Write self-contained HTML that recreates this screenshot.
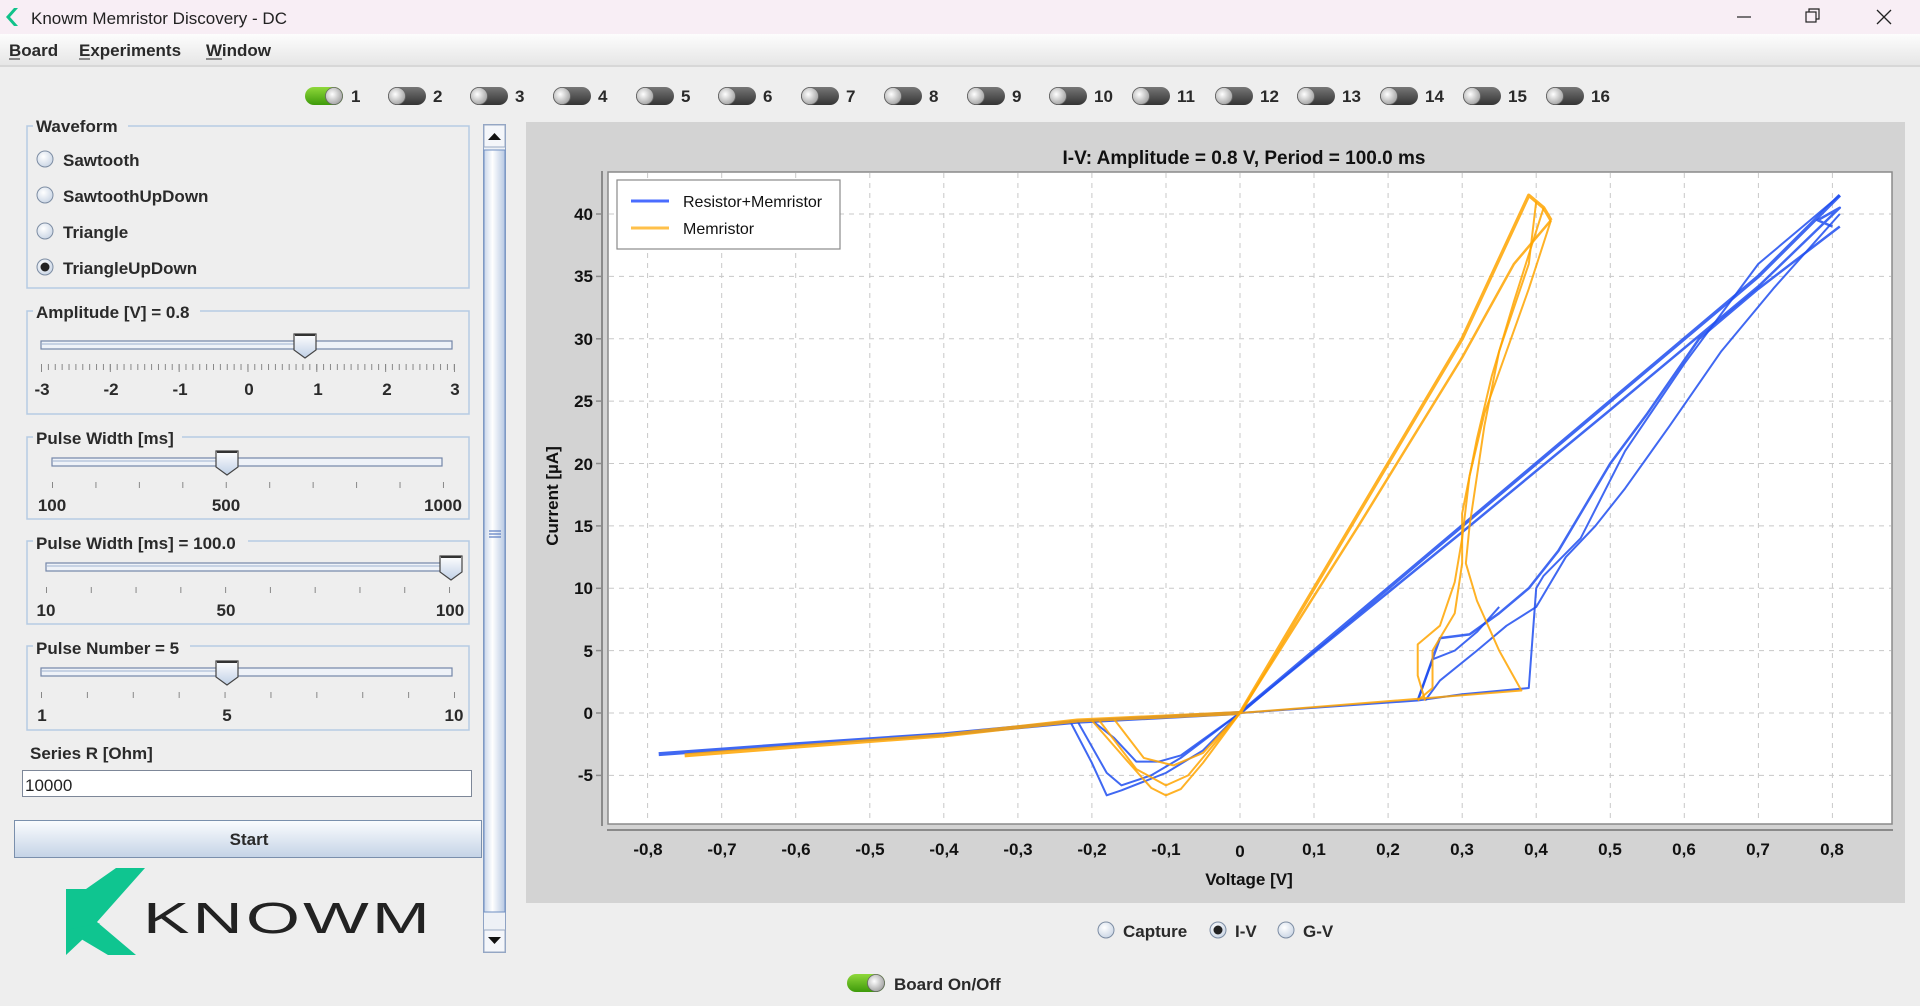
<!DOCTYPE html>
<html><head><meta charset="utf-8"><style>
html,body{margin:0;padding:0;width:1920px;height:1006px;overflow:hidden;background:#eeeeee;font-family:"Liberation Sans",sans-serif}
svg text{font-family:"Liberation Sans",sans-serif}
</style></head><body>
<svg width="1920" height="1006" viewBox="0 0 1920 1006" xmlns="http://www.w3.org/2000/svg" style="position:absolute;left:0;top:0">
<defs>
<linearGradient id="mb" x1="0" y1="0" x2="0" y2="1"><stop offset="0" stop-color="#fdfdfd"/><stop offset="1" stop-color="#e6e6e6"/></linearGradient>
<linearGradient id="tg" x1="0" y1="0" x2="0" y2="1"><stop offset="0" stop-color="#777"/><stop offset="1" stop-color="#333"/></linearGradient>
<linearGradient id="tgg" x1="0" y1="0" x2="0" y2="1"><stop offset="0" stop-color="#8fd83a"/><stop offset="1" stop-color="#3e9a0a"/></linearGradient>
<radialGradient id="kn" cx="0.4" cy="0.4" r="0.7"><stop offset="0" stop-color="#fff"/><stop offset="1" stop-color="#999"/></radialGradient>
<linearGradient id="btn" x1="0" y1="0" x2="0" y2="1"><stop offset="0" stop-color="#fbfcfe"/><stop offset="1" stop-color="#c4d3e6"/></linearGradient>
<linearGradient id="sb" x1="0" y1="0" x2="1" y2="0"><stop offset="0" stop-color="#c9d6ea"/><stop offset="0.4" stop-color="#fff"/><stop offset="1" stop-color="#b7c8e2"/></linearGradient>
<linearGradient id="th" x1="0" y1="0" x2="0" y2="1"><stop offset="0" stop-color="#fff"/><stop offset="1" stop-color="#c0d0e6"/></linearGradient>
<radialGradient id="rd" cx="0.4" cy="0.35" r="0.7"><stop offset="0" stop-color="#fff"/><stop offset="1" stop-color="#c8d4e4"/></radialGradient>
<g id="tog"><rect x="0" y="-9" width="38" height="18" rx="9" fill="url(#tg)"/><circle cx="9" cy="0" r="8.5" fill="url(#kn)" stroke="#666" stroke-width="0.8"/></g>
<g id="thumb"><path d="M-11,-11 H11 V5 L0,13 L-11,5 Z" fill="url(#th)" stroke="#444" stroke-width="1.2"/><line x1="-10" y1="-10" x2="10" y2="-10" stroke="#333" stroke-width="2"/></g>
</defs>

<!-- title bar -->
<rect x="0" y="0" width="1920" height="34" fill="#f8eef5"/>
<path d="M14,8 L6,17 L14,26 L18,26 L10,17 L18,8 Z" fill="#11c28a"/>
<text x="31" y="24" font-size="17" fill="#222">Knowm Memristor Discovery - DC</text>
<line x1="1737" y1="17" x2="1751" y2="17" stroke="#222" stroke-width="1.2"/>
<rect x="1806" y="12" width="10" height="10" fill="none" stroke="#222" stroke-width="1.2"/><path d="M1809,12 V9 H1819 V19 H1816" fill="none" stroke="#222" stroke-width="1.2"/>
<path d="M1877,10 L1891,24 M1891,10 L1877,24" stroke="#222" stroke-width="1.3"/>
<!-- menu -->
<rect x="0" y="34" width="1920" height="31" fill="url(#mb)"/>
<line x1="0" y1="66" x2="1920" y2="66" stroke="#cfcfcf" stroke-width="1.5"/>
<g font-size="17" font-weight="bold" fill="#2a2a2a">
<text x="9" y="56">Board</text><text x="79" y="56">Experiments</text><text x="206" y="56">Window</text></g>
<g stroke="#2a2a2a" stroke-width="1"><line x1="9" y1="59" x2="20" y2="59"/><line x1="79" y1="59" x2="90" y2="59"/><line x1="206" y1="59" x2="222" y2="59"/></g>

<!-- toggles -->
<g font-size="17" font-weight="bold" fill="#2a2a2a">
<g transform="translate(305,96)"><rect x="0" y="-9" width="38" height="18" rx="9" fill="url(#tgg)"/><circle cx="29" cy="0" r="8.5" fill="url(#kn)" stroke="#666" stroke-width="0.8"/></g><text x="351" y="102">1</text>
<use href="#tog" x="388" y="96"/><text x="433" y="102">2</text>
<use href="#tog" x="470" y="96"/><text x="515" y="102">3</text>
<use href="#tog" x="553" y="96"/><text x="598" y="102">4</text>
<use href="#tog" x="636" y="96"/><text x="681" y="102">5</text>
<use href="#tog" x="718" y="96"/><text x="763" y="102">6</text>
<use href="#tog" x="801" y="96"/><text x="846" y="102">7</text>
<use href="#tog" x="884" y="96"/><text x="929" y="102">8</text>
<use href="#tog" x="967" y="96"/><text x="1012" y="102">9</text>
<use href="#tog" x="1049" y="96"/><text x="1094" y="102">10</text>
<use href="#tog" x="1132" y="96"/><text x="1177" y="102">11</text>
<use href="#tog" x="1215" y="96"/><text x="1260" y="102">12</text>
<use href="#tog" x="1297" y="96"/><text x="1342" y="102">13</text>
<use href="#tog" x="1380" y="96"/><text x="1425" y="102">14</text>
<use href="#tog" x="1463" y="96"/><text x="1508" y="102">15</text>
<use href="#tog" x="1546" y="96"/><text x="1591" y="102">16</text>
</g>

<!-- left panel -->
<g fill="none" stroke="#b5cbe3" stroke-width="1.5">
<path d="M33,126 H27 V288 H469 V126 H128"/>
<path d="M33,311 H27 V414 H469 V311 H200"/>
<path d="M33,437 H27 V519 H469 V437 H182"/>
<path d="M33,541 H27 V624 H469 V541 H248"/>
<path d="M33,646 H27 V730 H469 V646 H190"/>
</g>
<g font-size="17" font-weight="bold" fill="#2a2a2a">
<text x="36" y="132">Waveform</text>
<text x="63" y="166">Sawtooth</text><text x="63" y="202">SawtoothUpDown</text><text x="63" y="238">Triangle</text><text x="63" y="274">TriangleUpDown</text>
<text x="36" y="318">Amplitude [V] = 0.8</text>
<text x="36" y="444">Pulse Width [ms]</text>
<text x="36" y="549">Pulse Width [ms] = 100.0</text>
<text x="36" y="654">Pulse Number = 5</text>
<text x="30" y="759">Series R [Ohm]</text>
</g>
<g stroke="#7d8da3" stroke-width="1" fill="url(#rd)">
<circle cx="45" cy="159" r="8"/><circle cx="45" cy="195" r="8"/><circle cx="45" cy="231" r="8"/><circle cx="45" cy="267" r="8"/></g>
<circle cx="45" cy="267" r="4.5" fill="#222"/>
<!-- sliders -->
<g stroke="#7486a8" stroke-width="1.2" fill="#eef2f8">
<rect x="41" y="341" width="411" height="8"/><rect x="52" y="458" width="390" height="8"/><rect x="46" y="563" width="415" height="8"/><rect x="41" y="668" width="411" height="8"/></g>
<g stroke="#b9c8de" stroke-width="1.5"><line x1="42" y1="344" x2="300" y2="344"/><line x1="53" y1="461" x2="222" y2="461"/><line x1="47" y1="566" x2="445" y2="566"/><line x1="42" y1="671" x2="222" y2="671"/></g>
<use href="#thumb" x="305" y="345"/><use href="#thumb" x="227" y="462"/><use href="#thumb" x="451" y="567"/><use href="#thumb" x="227" y="672"/>
<g stroke="#888" stroke-width="1">
<line x1="41" y1="367" x2="456" y2="367" stroke-dasharray="1 5.88" stroke-width="6"/>
<line x1="41" y1="368" x2="456" y2="368" stroke-dasharray="1 67.83" stroke-width="8"/>
<line x1="52" y1="485" x2="445" y2="485" stroke-dasharray="1 42.44" stroke-width="6"/>
<line x1="46" y1="590" x2="452" y2="590" stroke-dasharray="1 43.78" stroke-width="6"/>
<line x1="41" y1="695" x2="456" y2="695" stroke-dasharray="1 44.89" stroke-width="6"/>
</g>
<g font-size="17" font-weight="bold" fill="#2a2a2a" text-anchor="middle">
<text x="42" y="395">-3</text><text x="111" y="395">-2</text><text x="180" y="395">-1</text><text x="249" y="395">0</text><text x="318" y="395">1</text><text x="387" y="395">2</text><text x="455" y="395">3</text>
<text x="52" y="511">100</text><text x="226" y="511">500</text><text x="443" y="511">1000</text>
<text x="46" y="616">10</text><text x="226" y="616">50</text><text x="450" y="616">100</text>
<text x="42" y="721">1</text><text x="227" y="721">5</text><text x="454" y="721">10</text>
</g>
<rect x="22.5" y="770.5" width="449" height="26" fill="#fff" stroke="#7d8798"/>
<text x="25" y="791" font-size="17" fill="#222">10000</text>
<rect x="14.5" y="820.5" width="467" height="37" fill="url(#btn)" stroke="#7a8fac"/>
<text x="249" y="845" font-size="17" font-weight="bold" fill="#2a2a2a" text-anchor="middle">Start</text>
<!-- logo -->
<path d="M116,868 H145 L97,922 L136,955 H108 L66,930 V889 L86,889 Z" fill="#0fc590"/>
<path d="M100,923 L66,930 L66,955 Z" fill="#0fc590"/>
<text x="143" y="933" font-size="44" fill="#222" font-weight="normal" textLength="290" lengthAdjust="spacingAndGlyphs" style="letter-spacing:2px">KNOWM</text>
<!-- scrollbar -->
<rect x="483.5" y="124.5" width="22" height="828" fill="#eef1f6" stroke="#8fa3c4"/>
<rect x="484" y="125" width="21" height="22" fill="#f4f6fa" stroke="#9aaac4"/>
<path d="M488,140 L494.5,133 L501,140 Z" fill="#111"/>
<rect x="484" y="930" width="21" height="22" fill="#f4f6fa" stroke="#9aaac4"/>
<path d="M488,937 L494.5,944 L501,937 Z" fill="#111"/>
<rect x="484" y="150" width="21" height="762" fill="url(#sb)" stroke="#6f8fc2"/>
<g stroke="#5a7bc0" stroke-width="1.2"><line x1="489" y1="531" x2="501" y2="531"/><line x1="489" y1="534" x2="501" y2="534"/><line x1="489" y1="537" x2="501" y2="537"/></g>

<!-- chart panel -->
<rect x="526" y="122" width="1379" height="781" fill="#d3d3d3"/>
<text x="1244" y="164" font-size="19" font-weight="bold" fill="#111" text-anchor="middle">I-V: Amplitude = 0.8 V, Period = 100.0 ms</text>
<rect x="608" y="172" width="1284" height="652" fill="#fff" stroke="#8a8a8a" stroke-width="1.5"/>
<line x1="602" y1="171" x2="602" y2="826" stroke="#8a8a8a" stroke-width="2"/>
<line x1="607" y1="830" x2="1893" y2="830" stroke="#8a8a8a" stroke-width="2"/>
<g stroke="#c8c8c8" stroke-width="1" stroke-dasharray="5 5">
<line x1="647.6" y1="173" x2="647.6" y2="823"/><line x1="721.7" y1="173" x2="721.7" y2="823"/><line x1="795.7" y1="173" x2="795.7" y2="823"/><line x1="869.8" y1="173" x2="869.8" y2="823"/><line x1="943.8" y1="173" x2="943.8" y2="823"/><line x1="1017.9" y1="173" x2="1017.9" y2="823"/><line x1="1091.9" y1="173" x2="1091.9" y2="823"/><line x1="1166" y1="173" x2="1166" y2="823"/><line x1="1240" y1="173" x2="1240" y2="823"/><line x1="1314" y1="173" x2="1314" y2="823"/><line x1="1388.1" y1="173" x2="1388.1" y2="823"/><line x1="1462.2" y1="173" x2="1462.2" y2="823"/><line x1="1536.2" y1="173" x2="1536.2" y2="823"/><line x1="1610.3" y1="173" x2="1610.3" y2="823"/><line x1="1684.3" y1="173" x2="1684.3" y2="823"/><line x1="1758.4" y1="173" x2="1758.4" y2="823"/><line x1="1832.4" y1="173" x2="1832.4" y2="823"/>
<line x1="609" y1="214" x2="1891" y2="214"/><line x1="609" y1="276.4" x2="1891" y2="276.4"/><line x1="609" y1="338.8" x2="1891" y2="338.8"/><line x1="609" y1="401.1" x2="1891" y2="401.1"/><line x1="609" y1="463.5" x2="1891" y2="463.5"/><line x1="609" y1="525.9" x2="1891" y2="525.9"/><line x1="609" y1="588.3" x2="1891" y2="588.3"/><line x1="609" y1="650.6" x2="1891" y2="650.6"/><line x1="609" y1="713" x2="1891" y2="713"/><line x1="609" y1="775.4" x2="1891" y2="775.4"/>
</g>
<g stroke="#8a8a8a" stroke-width="1.5">
<line x1="596" y1="214" x2="602" y2="214"/><line x1="596" y1="276.4" x2="602" y2="276.4"/><line x1="596" y1="338.8" x2="602" y2="338.8"/><line x1="596" y1="401.1" x2="602" y2="401.1"/><line x1="596" y1="463.5" x2="602" y2="463.5"/><line x1="596" y1="525.9" x2="602" y2="525.9"/><line x1="596" y1="588.3" x2="602" y2="588.3"/><line x1="596" y1="650.6" x2="602" y2="650.6"/><line x1="596" y1="713" x2="602" y2="713"/><line x1="596" y1="775.4" x2="602" y2="775.4"/>
</g>
<g font-size="17" font-weight="bold" fill="#111" text-anchor="end">
<text x="593" y="220">40</text><text x="593" y="282">35</text><text x="593" y="345">30</text><text x="593" y="407">25</text><text x="593" y="470">20</text><text x="593" y="532">15</text><text x="593" y="594">10</text><text x="593" y="657">5</text><text x="593" y="719">0</text><text x="593" y="781">-5</text>
</g>
<g font-size="17" font-weight="bold" fill="#111" text-anchor="middle">
<text x="648" y="855">-0,8</text><text x="722" y="855">-0,7</text><text x="796" y="855">-0,6</text><text x="870" y="855">-0,5</text><text x="944" y="855">-0,4</text><text x="1018" y="855">-0,3</text><text x="1092" y="855">-0,2</text><text x="1166" y="855">-0,1</text><text x="1240" y="857">0</text><text x="1314" y="855">0,1</text><text x="1388" y="855">0,2</text><text x="1462" y="855">0,3</text><text x="1536" y="855">0,4</text><text x="1610" y="855">0,5</text><text x="1684" y="855">0,6</text><text x="1758" y="855">0,7</text><text x="1832" y="855">0,8</text>
<text x="1249" y="885">Voltage [V]</text>
<text transform="translate(558,496) rotate(-90)">Current [µA]</text>
</g>

<!-- curves -->
<g transform="translate(1240,713) scale(740.5,-12.475)" fill="none" stroke-linejoin="round">
<g stroke="#1f4ef0" stroke-opacity="0.85">
<polyline vector-effect="non-scaling-stroke" stroke-width="4" points="-0.785,-3.3 -0.6,-2.5 -0.4,-1.7 -0.22,-0.7 0,0"/>
<polyline vector-effect="non-scaling-stroke" stroke-width="2" points="-0.23,-0.6 -0.2,-4 -0.18,-6.6 -0.16,-6.2 -0.1,-4.8 -0.05,-3 0,0"/>
<polyline vector-effect="non-scaling-stroke" stroke-width="2" points="-0.22,-0.6 -0.18,-4.8 -0.16,-5.8 -0.12,-5 -0.08,-3.6 0,0"/>
<polyline vector-effect="non-scaling-stroke" stroke-width="2" points="-0.2,-0.6 -0.17,-2 -0.14,-3.9 -0.11,-3.9 -0.08,-3.4 0,0"/>
<polyline vector-effect="non-scaling-stroke" stroke-width="3.5" points="0,0 0.3,15 0.5,25 0.7,35 0.81,41.5"/>
<polyline vector-effect="non-scaling-stroke" stroke-width="2.5" points="0,0 0.3,14.5 0.5,24.3 0.7,34.2 0.81,40.5 0.78,39.5 0.8,39"/>
<polyline vector-effect="non-scaling-stroke" stroke-width="2.5" points="0.81,39 0.7,34 0.62,30 0.55,24 0.5,20 0.47,17 0.43,13 0.39,10 0.35,8 0.31,6.3 0.27,6 0.24,1"/>
<polyline vector-effect="non-scaling-stroke" stroke-width="2" points="0.81,40 0.72,34 0.65,29 0.58,23 0.52,18 0.48,15 0.44,12.5 0.4,8.5 0.36,7 0.32,5 0.27,2.6 0.25,1"/>
<polyline vector-effect="non-scaling-stroke" stroke-width="2" points="0.81,41.5 0.76,39 0.7,36 0.6,28 0.52,21 0.46,14 0.41,11 0.4,10 0.39,2 0.3,1.5 0.24,1 0,0"/>
<polyline vector-effect="non-scaling-stroke" stroke-width="2" points="0.24,1 0.26,4.3 0.29,5 0.32,6.5 0.35,8.5"/>
</g>
<g stroke="#ffa500" stroke-opacity="0.85">
<polyline vector-effect="non-scaling-stroke" stroke-width="4" points="-0.75,-3.4 -0.6,-2.7 -0.4,-1.8 -0.22,-0.6 0,0"/>
<polyline vector-effect="non-scaling-stroke" stroke-width="2" points="-0.2,-0.6 -0.15,-4 -0.12,-6 -0.1,-6.6 -0.08,-6.1 -0.05,-4 0,0"/>
<polyline vector-effect="non-scaling-stroke" stroke-width="2" points="-0.19,-0.6 -0.14,-4.5 -0.1,-5.8 -0.07,-5 0,0"/>
<polyline vector-effect="non-scaling-stroke" stroke-width="2" points="-0.17,-0.5 -0.13,-3.6 -0.09,-4.2 -0.05,-3.2 0,0"/>
<polyline vector-effect="non-scaling-stroke" stroke-width="3.5" points="0,0 0.15,15 0.3,30 0.39,41.5 0.41,40.5 0.42,39.5"/>
<polyline vector-effect="non-scaling-stroke" stroke-width="2.5" points="0,0 0.16,15 0.3,28.5 0.37,36 0.42,39.5"/>
<polyline vector-effect="non-scaling-stroke" stroke-width="2" points="0.42,39.5 0.39,34 0.36,29 0.33,24 0.31,19 0.3,14 0.29,10.5 0.27,7 0.24,5.5 0.24,3 0.25,1"/>
<polyline vector-effect="non-scaling-stroke" stroke-width="2" points="0.41,40.5 0.37,33 0.34,27 0.32,22 0.3,16 0.3,12 0.29,8 0.26,5 0.26,2 0.24,1"/>
<polyline vector-effect="non-scaling-stroke" stroke-width="2" points="0.4,41 0.39,36 0.35,29 0.33,23 0.31,15 0.305,12 0.32,9 0.35,5 0.38,1.8 0,0"/>
</g>
</g>
<!-- legend -->
<rect x="617" y="180" width="223" height="69" fill="#fff" stroke="#8a8a8a" stroke-width="1.2"/>
<line x1="631" y1="201" x2="669" y2="201" stroke="#4a6cff" stroke-width="3"/>
<line x1="631" y1="228" x2="669" y2="228" stroke="#ffc04a" stroke-width="3"/>
<text x="683" y="207" font-size="16" fill="#111">Resistor+Memristor</text>
<text x="683" y="234" font-size="16" fill="#111">Memristor</text>

<!-- bottom radios -->
<g stroke="#7d8da3" stroke-width="1" fill="url(#rd)"><circle cx="1106" cy="930" r="8"/><circle cx="1218" cy="930" r="8"/><circle cx="1286" cy="930" r="8"/></g>
<circle cx="1218" cy="930" r="4.5" fill="#222"/>
<g font-size="17" font-weight="bold" fill="#2a2a2a">
<text x="1123" y="937">Capture</text><text x="1235" y="937">I-V</text><text x="1303" y="937">G-V</text>
<text x="894" y="990">Board On/Off</text></g>
<g transform="translate(847,983)"><rect x="0" y="-9" width="38" height="18" rx="9" fill="url(#tgg)"/><circle cx="29" cy="0" r="8.5" fill="url(#kn)" stroke="#666" stroke-width="0.8"/></g>
</svg>
</body></html>
